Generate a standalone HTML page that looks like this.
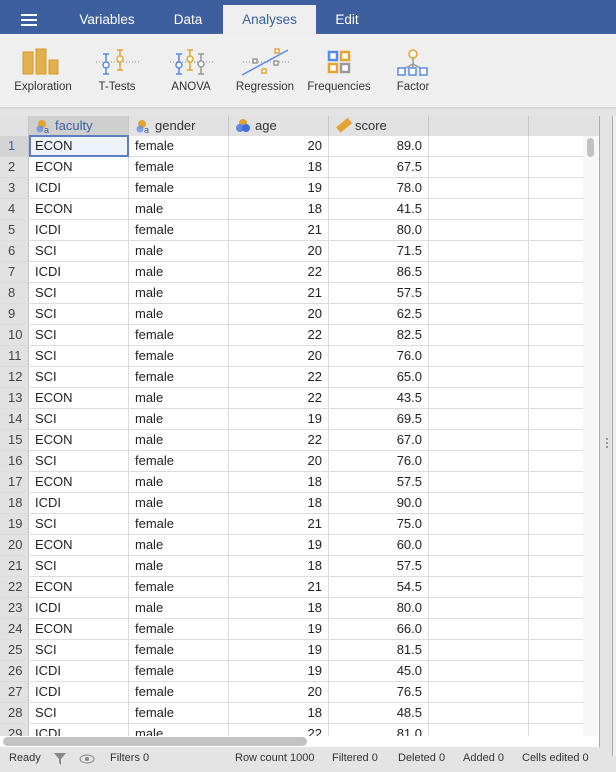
<!DOCTYPE html><html><head><style>
body{margin:0;width:616px;height:772px;overflow:hidden;background:#e4e4e4;font-family:"Liberation Sans",sans-serif;font-size:13px;color:#222;position:relative}
.a{position:absolute}
#top{left:0;top:0;width:616px;height:34px;background:#3d5f9e}
.tab{top:0;height:34px;line-height:39px;color:#fff;font-size:13.5px;text-align:center}
#tb{left:0;top:34px;width:616px;height:73px;background:#efefef;box-shadow:0 1px 2px #ccc}
.lbl{top:81px;font-size:11.5px;color:#333;text-align:center;width:90px}
.hd{top:116px;height:20px;background:#e2e2e2;border-right:1px solid #c8c8c8;line-height:20px;font-size:13px;color:#333}
.row{left:0;width:583px;height:21px;background:#fff;border-bottom:1px solid #dcdcdc;box-sizing:border-box}
.c{position:absolute;top:0;height:20px;line-height:20px;border-right:1px solid #dcdcdc;box-sizing:border-box;padding:0 6px;overflow:hidden;white-space:nowrap}
.n{left:0;width:29px;background:#e2e2e2;color:#444;padding-left:8px;border-right:1px solid #c0c0c0}
.st{top:752px;font-size:11px;color:#333}
</style></head><body>
<div class="a" id="top"></div>
<div class="a" style="left:21px;top:14px;width:16px;height:2px;background:#fff;box-shadow:0 5px 0 #fff,0 10px 0 #fff"></div>
<div class="a tab" style="left:70px;width:74px">Variables</div>
<div class="a tab" style="left:160px;width:56px">Data</div>
<div class="a tab" style="left:223px;width:93px;top:5px;height:29px;line-height:30px;background:#efefef;color:#3d5f9e">Analyses</div>
<div class="a tab" style="left:322px;width:50px">Edit</div>
<div class="a" id="tb"></div>
<svg class="a" style="left:0;top:34px" width="450" height="50">
<g fill="#e2b04f" stroke="#d49a2c"><rect x="23" y="18" width="10" height="22"/><rect x="36" y="15" width="10" height="25"/><rect x="49" y="26" width="9" height="14"/></g>
<g fill="none" stroke-width="1.5">
<line x1="96" y1="28" x2="140" y2="28" stroke="#aaa" stroke-dasharray="1,2"/>
<path d="M106 20v20M103 20h6M103 40h6" stroke="#5b8ae6"/><circle cx="106" cy="31" r="3" fill="#fff" stroke="#5b8ae6"/>
<path d="M120 16v20M117 16h6M117 36h6" stroke="#e2a535"/><circle cx="120" cy="25" r="3" fill="#fff" stroke="#e2a535"/>
<line x1="170" y1="28" x2="215" y2="28" stroke="#aaa" stroke-dasharray="1,2"/>
<path d="M179 20v20M176 20h6M176 40h6" stroke="#5b8ae6"/><circle cx="179" cy="31" r="3" fill="#fff" stroke="#5b8ae6"/>
<path d="M190 16v20M187 16h6M187 36h6" stroke="#e2a535"/><circle cx="190" cy="25" r="3" fill="#fff" stroke="#e2a535"/>
<path d="M201 20v20M198 20h6M198 40h6" stroke="#999"/><circle cx="201" cy="30" r="3" fill="#fff" stroke="#999"/>
<line x1="243" y1="28" x2="290" y2="28" stroke="#aaa" stroke-dasharray="1,2"/>
<line x1="242" y1="41" x2="288" y2="16" stroke="#5b8ae6"/>
<rect x="253" y="25" width="4" height="4" stroke="#999" fill="#fff"/><rect x="274" y="27" width="4" height="4" stroke="#999" fill="#fff"/>
<rect x="275" y="15" width="4" height="4" stroke="#e2a535" fill="#fff"/><rect x="262" y="35" width="4" height="4" stroke="#e2a535" fill="#fff"/>
</g>
<g stroke-width="2.5" fill="#fff"><rect x="329" y="18" width="8" height="8" stroke="#5b8ae6"/><rect x="341" y="18" width="8" height="8" stroke="#e2a535"/><rect x="329" y="30" width="8" height="8" stroke="#e2a535"/><rect x="341" y="30" width="8" height="8" stroke="#999"/></g>
<g fill="none" stroke-width="1.5"><path d="M413 24v6M413 30l-11 6M413 30l11 6M413 30v6" stroke="#999"/><circle cx="413" cy="20" r="4" stroke="#e2a535" fill="#fff"/>
<rect x="398" y="34" width="7" height="7" stroke="#5b8ae6" fill="#fff"/><rect x="409" y="34" width="7" height="7" stroke="#5b8ae6" fill="#fff"/><rect x="420" y="34" width="7" height="7" stroke="#5b8ae6" fill="#fff"/></g>
</svg>
<div class="a lbl" style="left:-2px">Exploration</div>
<div class="a lbl" style="left:72px">T-Tests</div>
<div class="a lbl" style="left:146px">ANOVA</div>
<div class="a lbl" style="left:220px">Regression</div>
<div class="a lbl" style="left:294px">Frequencies</div>
<div class="a lbl" style="left:368px">Factor</div>
<div class="a" style="left:0;top:116px;width:599px;height:631px;background:#fff;border-right:1px solid #aaa"></div>
<div class="a hd" style="left:0;width:28px"></div>
<div class="a hd" style="left:29px;background:#cfcfcf;color:#3d5f9e;padding-left:26px;box-sizing:border-box;width:100px">faculty</div>
<div class="a hd" style="left:129px;padding-left:26px;box-sizing:border-box;width:100px">gender</div>
<div class="a hd" style="left:229px;padding-left:26px;box-sizing:border-box;width:100px">age</div>
<div class="a hd" style="left:329px;padding-left:26px;box-sizing:border-box;width:100px">score</div>
<div class="a hd" style="left:429px;width:99px"></div>
<div class="a hd" style="left:529px;width:70px;border-right:none"></div>
<svg class="a" style="left:0;top:116px" width="360" height="20">
<g><circle cx="42" cy="8" r="4" fill="#e2a535"/><circle cx="40" cy="13" r="3.5" fill="#5b8ae6" fill-opacity=".7"/><text x="44" y="17" font-size="9" fill="#3d5f9e">a</text></g>
<g><circle cx="142" cy="8" r="4" fill="#e2a535"/><circle cx="140" cy="13" r="3.5" fill="#5b8ae6" fill-opacity=".7"/><text x="144" y="17" font-size="9" fill="#3d5f9e">a</text></g>
<g><circle cx="243" cy="7" r="4" fill="#e2a535"/><circle cx="240" cy="12" r="4" fill="#5b8ae6"/><circle cx="246" cy="12" r="4" fill="#3d6fd6"/></g>
<g transform="rotate(-40 344 10)"><rect x="337" y="6" width="15" height="7" fill="#e2a535"/></g>
</svg>
<div class="a" style="left:0;top:136px;width:583px;height:600px;overflow:hidden">
<div id="rows"></div></div>
<div class="a" style="left:583px;top:136px;width:15px;height:600px;background:#f7f7f7"></div>
<div class="a" style="left:587px;top:138px;width:7px;height:19px;border-radius:4px;background:#c2c2c2"></div>
<div class="a" style="left:29px;top:135px;width:100px;height:22px;box-sizing:border-box;border:2px solid #5b7fbf"></div>
<div class="a" style="left:3px;top:737px;width:304px;height:9px;border-radius:5px;background:#c2c2c2"></div>
<div class="a" style="left:612px;top:116px;width:4px;height:640px;border-left:1px solid #aaa;background:#f0f0f0"></div>
<div class="a" style="left:606px;top:438px;width:2px;height:2px;background:#999;box-shadow:0 4px 0 #999,0 8px 0 #999"></div>
<div class="a st" style="left:9px">Ready</div>
<svg class="a" style="left:53px;top:752px" width="50" height="14"><path d="M1 1h12l-5 6v6l-2-2V7z" fill="#888"/><ellipse cx="34" cy="7" rx="7" ry="4" fill="none" stroke="#888"/><circle cx="34" cy="7" r="2" fill="#888"/></svg>
<div class="a st" style="left:110px">Filters 0</div>
<div class="a st" style="left:235px">Row count 1000</div>
<div class="a st" style="left:332px">Filtered 0</div>
<div class="a st" style="left:398px">Deleted 0</div>
<div class="a st" style="left:463px">Added 0</div>
<div class="a st" style="left:522px">Cells edited 0</div>
<script>
var d=[["ECON","female",20,"89.0"],["ECON","female",18,"67.5"],["ICDI","female",19,"78.0"],["ECON","male",18,"41.5"],["ICDI","female",21,"80.0"],["SCI","male",20,"71.5"],["ICDI","male",22,"86.5"],["SCI","male",21,"57.5"],["SCI","male",20,"62.5"],["SCI","female",22,"82.5"],["SCI","female",20,"76.0"],["SCI","female",22,"65.0"],["ECON","male",22,"43.5"],["SCI","male",19,"69.5"],["ECON","male",22,"67.0"],["SCI","female",20,"76.0"],["ECON","male",18,"57.5"],["ICDI","male",18,"90.0"],["SCI","female",21,"75.0"],["ECON","male",19,"60.0"],["SCI","male",18,"57.5"],["ECON","female",21,"54.5"],["ICDI","male",18,"80.0"],["ECON","female",19,"66.0"],["SCI","female",19,"81.5"],["ICDI","female",19,"45.0"],["ICDI","female",20,"76.5"],["SCI","female",18,"48.5"],["ICDI","male",22,"81.0"]];
var h="";d.forEach(function(r,i){h+='<div class="row a" style="top:'+(i*21)+'px"><div class="c n"'+(i==0?' style="color:#3d5f9e;background:#d4d4d4"':'')+'>'+(i+1)+'</div><div class="c" style="left:29px;width:100px'+(i==0?';background:#eef2fa':'')+'">'+r[0]+'</div><div class="c" style="left:129px;width:100px">'+r[1]+'</div><div class="c" style="left:229px;width:100px;text-align:right">'+r[2]+'</div><div class="c" style="left:329px;width:100px;text-align:right">'+r[3]+'</div><div class="c" style="left:429px;width:100px"></div></div>'});
document.getElementById("rows").innerHTML=h;
</script>
</body></html>
